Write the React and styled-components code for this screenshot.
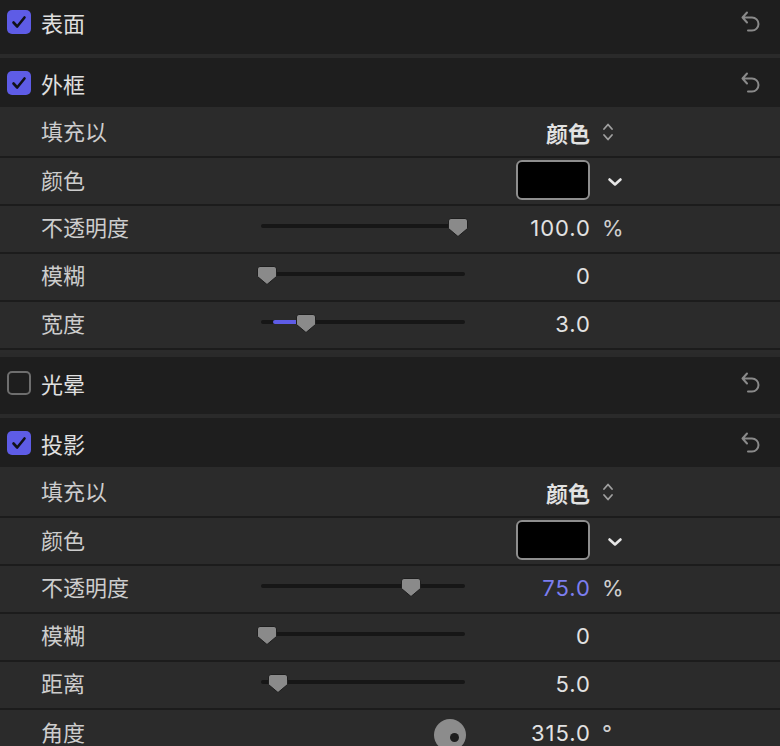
import styled, { createGlobalStyle } from 'styled-components';

const GlobalStyle = createGlobalStyle`
  body {
    margin: 0;
    background: #2a2a2a;
    font-family: "Noto Sans CJK SC", "Noto Sans", sans-serif;
    overflow: hidden;
  }
`;

const sections = [
  { title: '表面', checked: true, height: 54, padBottom: 10 },
  {
    title: '外框',
    checked: true,
    height: 49,
    rows: [
      { label: '填充以', kind: 'select', value: '颜色' },
      { label: '颜色', kind: 'color' },
      { label: '不透明度', kind: 'slider', pos: 197, value: '100.0', unit: '%' },
      { label: '模糊', kind: 'slider', pos: 6, value: '0' },
      { label: '宽度', kind: 'slider', pos: 45, fillFrom: 12, value: '3.0' },
    ],
  },
  { title: '光晕', checked: false, height: 57, padBottom: 5 },
  {
    title: '投影',
    checked: true,
    height: 49,
    rows: [
      { label: '填充以', kind: 'select', value: '颜色' },
      { label: '颜色', kind: 'color' },
      { label: '不透明度', kind: 'slider', pos: 150, value: '75.0', unit: '%', accent: true },
      { label: '模糊', kind: 'slider', pos: 6, value: '0' },
      { label: '距离', kind: 'slider', pos: 17, value: '5.0' },
      { label: '角度', kind: 'dial', value: '315.0', unit: '°' },
    ],
  },
];

function CheckBox({ checked }) {
  return (
    <StCheck $checked={checked}>
      {checked ? (
        <svg width="24" height="24" viewBox="0 0 24 24">
          <path
            d="M6.5 12.5 L10.2 16.5 L17.5 7.5"
            fill="none"
            stroke="#111118"
            strokeWidth="2.6"
            strokeLinecap="round"
            strokeLinejoin="round"
          />
        </svg>
      ) : null}
    </StCheck>
  );
}

function UndoIcon() {
  return (
    <svg width="22" height="24" viewBox="0 0 22 24">
      <path
        d="M7 2.5 L2.5 7.5 L7 12.5 M2.5 7.5 H12 a6.5 6.5 0 0 1 0 13 H8"
        fill="none"
        stroke="#8a8a8a"
        strokeWidth="2"
        strokeLinecap="round"
        strokeLinejoin="round"
      />
    </svg>
  );
}

function Slider({ pos, fillFrom }) {
  return (
    <StSlider>
      <StTrack />
      {fillFrom !== undefined ? (
        <StFill style={{ left: fillFrom, width: pos - fillFrom - 8 }} />
      ) : null}
      <StThumb style={{ left: pos - 10 }} width="20" height="19" viewBox="0 0 20 19">
        <path
          d="M3 0.5 H17 a2.5 2.5 0 0 1 2.5 2.5 V10.5 L10 18.5 L0.5 10.5 V3 a2.5 2.5 0 0 1 2.5 -2.5 Z"
          fill="#8a8a8a"
          stroke="#1e1e1e"
          strokeWidth="1"
        />
      </StThumb>
    </StSlider>
  );
}

function Dial() {
  return (
    <StDialCell>
      <svg width="34" height="34" viewBox="0 0 34 34">
        <circle cx="17" cy="17" r="16" fill="#8c8c8c" />
        <circle cx="21.5" cy="19.5" r="4.5" fill="#1e1e1e" />
      </svg>
    </StDialCell>
  );
}

function UpDown() {
  return (
    <svg width="12" height="22" viewBox="0 0 12 22">
      <path
        d="M2 8 L6 3.5 L10 8 M2 14 L6 18.5 L10 14"
        fill="none"
        stroke="#a0a0a0"
        strokeWidth="1.8"
        strokeLinecap="round"
        strokeLinejoin="round"
      />
    </svg>
  );
}

function ChevronDown() {
  return (
    <svg width="16" height="12" viewBox="0 0 16 12">
      <path
        d="M2.5 3.5 L8 8.5 L13.5 3.5"
        fill="none"
        stroke="#e6e6e6"
        strokeWidth="2.6"
        strokeLinecap="round"
        strokeLinejoin="round"
      />
    </svg>
  );
}

function PropRow({ row }) {
  return (
    <StRow>
      <StLabel>{row.label}</StLabel>
      <div>
        {row.kind === 'slider' ? <Slider pos={row.pos} fillFrom={row.fillFrom} /> : null}
        {row.kind === 'dial' ? <Dial /> : null}
      </div>
      <StValueCell>
        {row.kind === 'color' ? (
          <StSwatch />
        ) : (
          <StValue $accent={row.accent} $cjk={row.kind === 'select'}>
            {row.value}
          </StValue>
        )}
      </StValueCell>
      <StUnit $raise={row.unit === '°'}>
        {row.kind === 'select' ? <UpDown /> : null}
        {row.kind === 'color' ? (
          <StChevronWrap>
            <ChevronDown />
          </StChevronWrap>
        ) : null}
        {row.unit}
      </StUnit>
    </StRow>
  );
}

function App() {
  return (
    <>
      <GlobalStyle />
      <StPanel>
        {sections.map((section) => (
          <section key={section.title}>
            <StHeader $height={section.height} $padBottom={section.padBottom}>
              <CheckBox checked={section.checked} />
              <StHeaderTitle>{section.title}</StHeaderTitle>
              <StUndo>
                <UndoIcon />
              </StUndo>
            </StHeader>
            {section.rows ? (
              <StRows>
                {section.rows.map((row) => (
                  <PropRow key={row.label} row={row} />
                ))}
              </StRows>
            ) : null}
          </section>
        ))}
      </StPanel>
    </>
  );
}

export default App;

const StPanel = styled.div`
  width: 780px;
  display: flex;
  flex-direction: column;
  gap: 4px;
`;

const StHeader = styled.div`
  box-sizing: border-box;
  height: ${(p) => p.$height}px;
  padding: 0 18px ${(p) => p.$padBottom || 0}px 7px;
  display: flex;
  align-items: center;
  gap: 10px;
  background: #1e1e1e;
`;

const StCheck = styled.div`
  box-sizing: border-box;
  width: 24px;
  height: 24px;
  border-radius: 5px;
  display: flex;
  align-items: center;
  justify-content: center;
  background: ${(p) => (p.$checked ? '#5e5ce6' : 'transparent')};
  border: ${(p) => (p.$checked ? 'none' : '2px solid #6e6e6e')};
`;

const StHeaderTitle = styled.div`
  flex: 1;
  font-size: 22px;
  font-weight: 400;
  color: #e0e0e0;
  line-height: 1;
`;

const StUndo = styled.div`
  display: flex;
  align-items: center;
`;

const StRows = styled.div`
  background: #2b2b2b;
  padding: 3px 0;
`;

const StRow = styled.div`
  box-sizing: border-box;
  height: 48px;
  padding-left: 41px;
  padding-bottom: 6px;
  display: grid;
  grid-template-columns: 220px 204px 125px 1fr;
  align-items: center;
  border-bottom: 2px solid #1c1c1c;
`;

const StLabel = styled.div`
  font-size: 22px;
  color: #cdcdcd;
  line-height: 1;
`;

const StSlider = styled.div`
  position: relative;
  height: 20px;
`;

const StTrack = styled.div`
  position: absolute;
  left: 0;
  right: 0;
  top: 8px;
  height: 4px;
  border-radius: 2px;
  background: #161616;
`;

const StFill = styled.div`
  position: absolute;
  top: 8px;
  height: 4px;
  border-radius: 2px;
  background: #5e5ce6;
`;

const StThumb = styled.svg`
  position: absolute;
  top: 2px;
`;

const StDialCell = styled.div`
  display: flex;
  justify-content: flex-end;
  margin-right: -2px;
  padding-top: 8px;
`;

const StValueCell = styled.div`
  display: flex;
  justify-content: flex-end;
  align-items: center;
`;

const StValue = styled.div`
  font-family: ${(p) =>
    p.$cjk ? '"Noto Sans CJK SC", sans-serif' : 'Inter, "Noto Sans", sans-serif'};
  font-size: 22px;
  font-weight: ${(p) => (p.$cjk ? 600 : 400)};
  letter-spacing: ${(p) => (p.$cjk ? '0' : '1px')};
  margin-right: ${(p) => (p.$cjk ? '0' : '-1px')};
  color: ${(p) => (p.$accent ? '#7c7ef0' : '#e2e2e2')};
  line-height: 1;
  padding-top: 3px;
`;

const StSwatch = styled.div`
  box-sizing: border-box;
  width: 74px;
  height: 40px;
  margin-top: 2px;
  border-radius: 6px;
  border: 2px solid #8e8e8e;
  background: #000;
`;

const StUnit = styled.div`
  padding-left: 12px;
  display: flex;
  align-items: ${(p) => (p.$raise ? 'flex-start' : 'center')};
  font-family: Inter, "Noto Sans", sans-serif;
  font-size: 22px;
  color: #cfcfcf;
  line-height: 1;
  padding-top: ${(p) => (p.$raise ? '0' : '3px')};
  align-self: ${(p) => (p.$raise ? 'start' : 'center')};
  margin-top: ${(p) => (p.$raise ? '12px' : '0')};
`;

const StChevronWrap = styled.div`
  padding-left: 5px;
  padding-top: 3px;
  display: flex;
`;
